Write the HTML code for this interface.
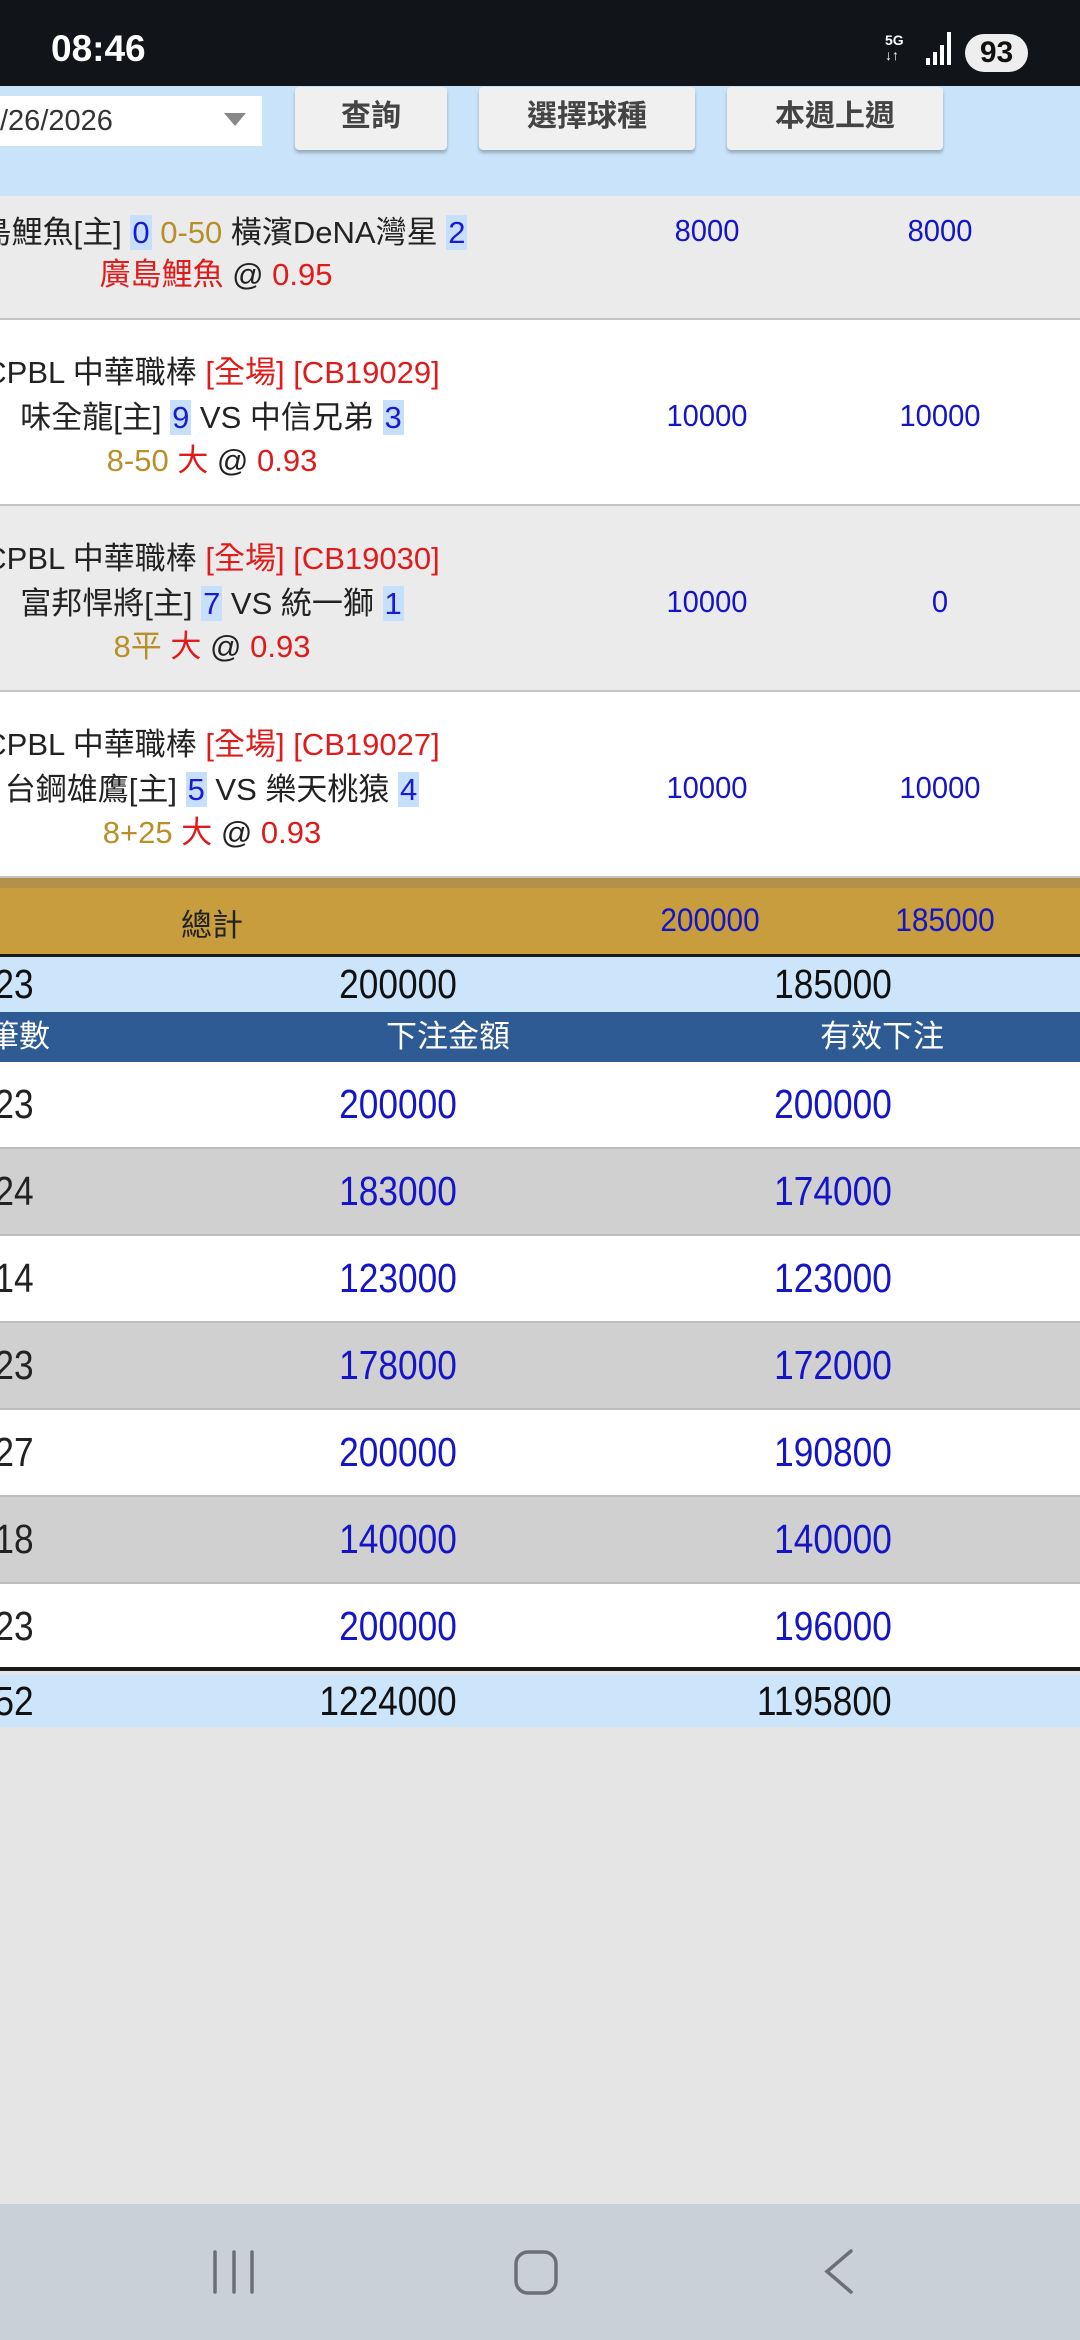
<!DOCTYPE html>
<html><head><meta charset="utf-8"><style>
*{margin:0;padding:0;box-sizing:border-box}
body{width:1080px;height:2340px;position:relative;overflow:hidden;background:#e5e5e5;font-family:"Liberation Sans","Noto Sans CJK TC",sans-serif;color:#222}
.a{position:absolute}
.c{text-align:center;white-space:nowrap}
.blue{color:#1515c8}
.red{color:#e01b1b}
.gold{color:#b8902a}
.hl{background:#c6e0fb;color:#1a1ad0;padding:0 2px}
.btn{position:absolute;top:87px;height:63px;background:#f0f0f0;border-radius:4px;box-shadow:0 3px 3px rgba(0,0,0,.25);font-size:30px;font-weight:bold;color:#444;text-align:center;line-height:60px}
.mrow{position:absolute;left:0;width:1080px;border-bottom:2px solid #c4c4c4}
.mrow .t{position:absolute;left:-188px;width:800px;text-align:center;font-size:31px;line-height:44px;white-space:nowrap}
.mrow .n{position:absolute;width:200px;text-align:center;font-size:31px;color:#1515c8;transform:scaleX(.94)}
.drow{position:absolute;left:0;width:1080px;height:87px;border-bottom:2px solid #bdbdbd;font-size:41px;line-height:85px}
.drow span,.lb span{position:absolute;transform:scaleX(.86);transform-origin:right center}
.lb{font-size:41px}
</style></head><body>
<!-- status bar -->
<div class="a" style="left:0;top:0;width:1080px;height:86px;background:#111419"></div>
<div class="a" style="left:51px;top:28px;font-size:37px;font-weight:bold;color:#fff">08:46</div>
<div class="a" style="left:885px;top:33px;font-size:14px;font-weight:bold;color:#fff;line-height:15px">5G<br>↓↑</div>
<svg class="a" style="left:925px;top:30px" width="30" height="36"><rect x="1" y="28" width="4" height="7" fill="#fff"/><rect x="8" y="22" width="4" height="13" fill="#fff"/><rect x="15" y="15" width="4" height="20" fill="#fff"/><rect x="22" y="2" width="4" height="33" fill="#fff"/></svg>
<div class="a" style="left:965px;top:34px;width:63px;height:38px;border-radius:19px;background:#eee;color:#111;font-weight:bold;font-size:30px;text-align:center;line-height:38px">93</div>
<!-- header -->
<div class="a" style="left:0;top:86px;width:1080px;height:110px;background:#c9e3fa"></div>
<div class="a" style="left:0;top:96px;width:262px;height:50px;background:#fff;font-size:29px;line-height:50px;color:#333">/26/2026</div>
<div class="a" style="left:224px;top:113px;width:0;height:0;border-left:11px solid transparent;border-right:11px solid transparent;border-top:13px solid #888"></div>
<div class="btn" style="left:295px;width:152px">查詢</div>
<div class="btn" style="left:479px;width:216px">選擇球種</div>
<div class="btn" style="left:727px;width:216px">本週上週</div>
<div class="a" style="left:0;top:196px;width:1080px;height:22px;background:linear-gradient(#a8a8a8,#ebebeb)"></div>
<!-- match rows -->
<div class="mrow" style="top:196px;height:124px;background:#ebebeb">
 <div class="t" style="top:15px;left:-176px">島鯉魚[主] <span class="hl">0</span> <span class="gold">0-50</span> 橫濱DeNA灣星 <span class="hl">2</span></div>
 <div class="t" style="top:57px;left:-184px"><span class="red">廣島鯉魚</span> @ <span class="red">0.95</span></div>
 <div class="n" style="left:607px;top:17px">8000</div><div class="n" style="left:840px;top:17px">8000</div>
</div>
<div class="mrow" style="top:320px;height:186px;background:#fff">
 <div class="t" style="top:31px">CPBL 中華職棒 <span class="red">[全場] [CB19029]</span></div>
 <div class="t" style="top:76px">味全龍[主] <span class="hl">9</span> VS 中信兄弟 <span class="hl">3</span></div>
 <div class="t" style="top:119px"><span class="gold">8-50</span> <span class="red">大</span> @ <span class="red">0.93</span></div>
 <div class="n" style="left:607px;top:78px">10000</div><div class="n" style="left:840px;top:78px">10000</div>
</div>
<div class="mrow" style="top:506px;height:186px;background:#ebebeb">
 <div class="t" style="top:31px">CPBL 中華職棒 <span class="red">[全場] [CB19030]</span></div>
 <div class="t" style="top:76px">富邦悍將[主] <span class="hl">7</span> VS 統一獅 <span class="hl">1</span></div>
 <div class="t" style="top:119px"><span class="gold">8平</span> <span class="red">大</span> @ <span class="red">0.93</span></div>
 <div class="n" style="left:607px;top:78px">10000</div><div class="n" style="left:840px;top:78px">0</div>
</div>
<div class="mrow" style="top:692px;height:186px;background:#fff">
 <div class="t" style="top:31px">CPBL 中華職棒 <span class="red">[全場] [CB19027]</span></div>
 <div class="t" style="top:76px">台鋼雄鷹[主] <span class="hl">5</span> VS 樂天桃猿 <span class="hl">4</span></div>
 <div class="t" style="top:119px"><span class="gold">8+25</span> <span class="red">大</span> @ <span class="red">0.93</span></div>
 <div class="n" style="left:607px;top:78px">10000</div><div class="n" style="left:840px;top:78px">10000</div>
</div>
<!-- total gold -->
<div class="a" style="left:0;top:878px;width:1080px;height:79px;background:#c89d3d;border-top:10px solid #b49149;border-bottom:3px solid #1a1a1a"></div>
<div class="a c" style="left:112px;top:900px;width:200px;font-size:31px;color:#222">總計</div>
<div class="a c blue" style="left:610px;top:902px;width:200px;font-size:32px;transform:scaleX(.93)">200000</div>
<div class="a c blue" style="left:845px;top:902px;width:200px;font-size:32px;transform:scaleX(.93)">185000</div>
<!-- light blue -->
<div class="a lb" style="left:0;top:957px;width:1080px;height:55px;background:#cce5fb;line-height:55px;color:#111">
 <span style="left:-12px">23</span><span style="right:623px">200000</span><span style="right:188px">185000</span></div>
<!-- header blue -->
<div class="a" style="left:0;top:1012px;width:1080px;height:50px;background:#2e5b93;color:#fff;font-size:31px;line-height:50px">
 <span class="a" style="left:-12px">筆數</span><span class="a" style="left:386px">下注金額</span><span class="a" style="left:820px">有效下注</span></div>
<!-- data rows -->
<div class="drow" style="top:1062px;background:#fff"><span style="left:-12px">23</span><span class="blue" style="right:623px">200000</span><span class="blue" style="right:188px">200000</span></div>
<div class="drow" style="top:1149px;background:#d0d0d0"><span style="left:-12px">24</span><span class="blue" style="right:623px">183000</span><span class="blue" style="right:188px">174000</span></div>
<div class="drow" style="top:1236px;background:#fff"><span style="left:-12px">14</span><span class="blue" style="right:623px">123000</span><span class="blue" style="right:188px">123000</span></div>
<div class="drow" style="top:1323px;background:#d0d0d0"><span style="left:-12px">23</span><span class="blue" style="right:623px">178000</span><span class="blue" style="right:188px">172000</span></div>
<div class="drow" style="top:1410px;background:#fff"><span style="left:-12px">27</span><span class="blue" style="right:623px">200000</span><span class="blue" style="right:188px">190800</span></div>
<div class="drow" style="top:1497px;background:#d0d0d0"><span style="left:-12px">18</span><span class="blue" style="right:623px">140000</span><span class="blue" style="right:188px">140000</span></div>
<div class="drow" style="top:1584px;background:#fff;border-bottom:4px solid #1a1a1a"><span style="left:-12px">23</span><span class="blue" style="right:623px">200000</span><span class="blue" style="right:188px">196000</span></div>
<div class="a lb" style="left:0;top:1675px;width:1080px;height:52px;background:#cce5fb;line-height:52px;color:#111">
 <span style="left:-12px">52</span><span style="right:623px">1224000</span><span style="right:188px">1195800</span></div>
<!-- nav bar -->
<div class="a" style="left:0;top:2204px;width:1080px;height:136px;background:#c9d0d8"></div>
<svg class="a" style="left:0;top:2204px" width="1080" height="136">
 <g stroke="#6b7078" stroke-width="3.5" stroke-linecap="round" fill="none">
  <line x1="215" y1="48" x2="215" y2="88"/><line x1="234" y1="48" x2="234" y2="88"/><line x1="252" y1="48" x2="252" y2="88"/>
  <rect x="516" y="48" width="40" height="41" rx="12"/>
  <path d="M851 47 L827 67.5 L851 88"/>
 </g>
</svg>
</body></html>
